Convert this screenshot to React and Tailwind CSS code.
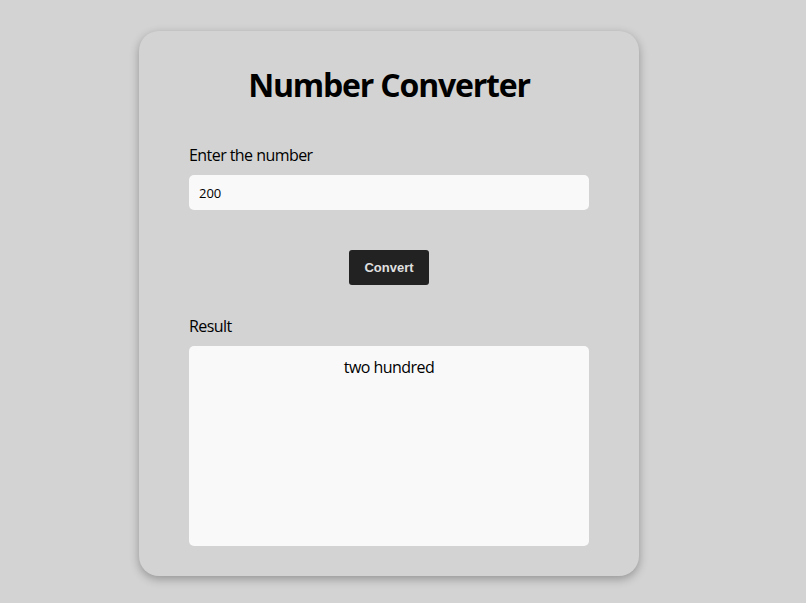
import React, { useState } from 'react';

const toWords = (n) => {
  const ones = ['zero', 'one', 'two', 'three', 'four', 'five', 'six', 'seven', 'eight', 'nine', 'ten', 'eleven', 'twelve', 'thirteen', 'fourteen', 'fifteen', 'sixteen', 'seventeen', 'eighteen', 'nineteen'];
  const tens = ['', '', 'twenty', 'thirty', 'forty', 'fifty', 'sixty', 'seventy', 'eighty', 'ninety'];
  if (n < 20) return ones[n];
  if (n < 100) return tens[Math.floor(n / 10)] + (n % 10 ? '-' + ones[n % 10] : '');
  if (n < 1000) return ones[Math.floor(n / 100)] + ' hundred' + (n % 100 ? ' ' + toWords(n % 100) : '');
  return String(n);
};

const App = () => {
  const [value, setValue] = useState('200');
  const [result, setResult] = useState('two hundred');

  const convert = () => {
    const n = parseInt(value, 10);
    setResult(isNaN(n) ? '' : toWords(n));
  };

  return (
    <div className="min-h-screen bg-[#d3d3d3] pt-[31px] pl-[139px] font-['Open_Sans',sans-serif] text-black">
      <div className="w-[500px] rounded-[20px] bg-[#d3d3d3] px-[50px] pt-[30px] pb-[30px] shadow-[0_3px_10px_rgba(0,0,0,0.3)]">
        <h1 className="text-center text-[32px] font-bold leading-[48px] tracking-[-0.037em]">Number Converter</h1>

        <label className="mt-[35px] block text-[16px] leading-[22px] tracking-[-0.035em]">Enter the number</label>
        <input
          className="mt-[9px] block h-[35px] w-full rounded-[5px] bg-[#f9f9f9] px-[10px] text-[13px] outline-none"
          value={value}
          onChange={e => setValue(e.target.value)}
        />

        <div className="mt-[40px] flex justify-center">
          <button
            onClick={convert}
            className="h-[35px] w-[80px] rounded-[3px] bg-[#222222] font-['Liberation_Sans',sans-serif] text-[13px] font-bold text-[#e0e0e0]"
          >
            Convert
          </button>
        </div>

        <label className="mt-[30px] block text-[16px] leading-[22px] tracking-[-0.035em]">Result</label>
        <div className="mt-[9px] h-[200px] w-full rounded-[5px] bg-[#f9f9f9] pt-[10px] text-center text-[16px] leading-[22px] tracking-[-0.035em]">
          {result}
        </div>
      </div>
    </div>
  );
};

export default App;
